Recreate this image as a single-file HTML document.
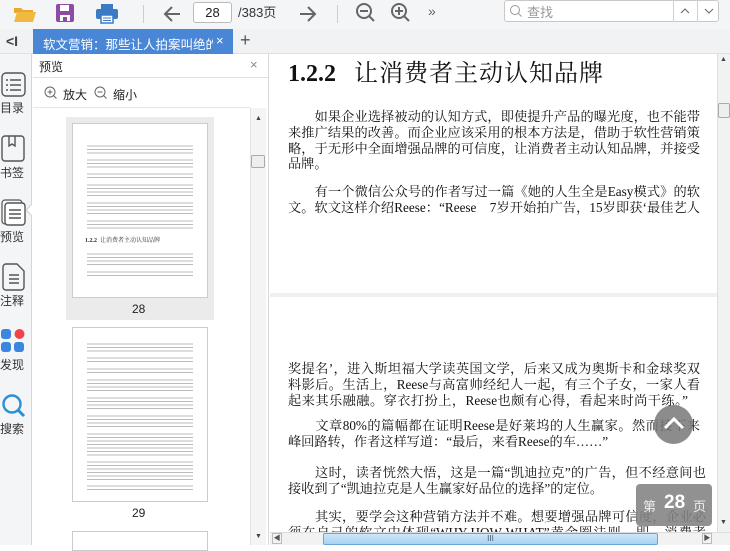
<!DOCTYPE html>
<html><head><meta charset="utf-8"><style>
*{margin:0;padding:0;box-sizing:border-box}
body{width:730px;height:545px;overflow:hidden;background:#fff;font-family:"Liberation Sans","Noto Sans CJK SC",sans-serif;position:relative}
.a{position:absolute}
.tb{left:0;top:0;width:730px;height:29px;background:#f4f5f7}
.tabbar{left:0;top:29px;width:730px;height:25px;background:#f1f2f4;border-bottom:1px solid #e0e0e0}
.side{left:0;top:54px;width:32px;height:491px;background:#f4f5f7;border-right:1px solid #d6d6d6}
.sl{font-size:12px;color:#333;width:32px;text-align:center}
.panel{left:33px;top:54px;width:236px;height:491px;background:#fff;border-right:1px solid #d8d8d8}
.pt{font-size:12px;color:#222}
.view{left:270px;top:54px;width:447px;height:478px;background:#f0f0f0}
.pg{background:#fff;left:270px;width:447px}
.ln{position:absolute;left:288px;width:412px;font-family:"Liberation Serif","Noto Serif CJK SC",serif;font-size:13.2px;line-height:17px;color:#111;text-align:justify;text-align-last:justify;white-space:nowrap;overflow:visible}
.ln.l{text-align-last:left}
.th{background:#fff;border:1px solid #ccc}
.tx{position:absolute;left:14px;right:14px;background:repeating-linear-gradient(#fff 0,#fff 1.3px,#bbb 1.3px,#bbb 2.3px,#fff 2.3px,#fff 3.5px)}
</style></head><body>
<div class="a tb"></div>
<svg class="a" style="left:13px;top:4px" width="24" height="20"><path d="M1 4h7l2 2h10v3H1z" fill="#e8a830"/><path d="M1 18L4 8h19l-3 10z" fill="#f2b940"/></svg>
<svg class="a" style="left:56px;top:4px" width="19" height="19"><rect x="0" y="0" width="18" height="18" rx="2" fill="#8e4aa5"/><rect x="4" y="1" width="9" height="6" fill="#fff"/><rect x="4" y="11" width="10" height="6" fill="#fff"/><rect x="7" y="13" width="4" height="4" fill="#8e4aa5"/></svg>
<svg class="a" style="left:96px;top:4px" width="22" height="20"><rect x="5" y="0" width="12" height="5" fill="#3b7bc4"/><rect x="0" y="5" width="22" height="10" rx="2" fill="#3b7bc4"/><rect x="5" y="11" width="12" height="8" fill="#fff" stroke="#3b7bc4" stroke-width="1.5"/><line x1="7" y1="14" x2="15" y2="14" stroke="#3b7bc4"/><line x1="7" y1="16.5" x2="15" y2="16.5" stroke="#3b7bc4"/></svg>
<div class="a" style="left:143px;top:5px;width:1px;height:18px;background:#ccc"></div>
<svg class="a" style="left:162px;top:4px" width="20" height="20"><path d="M18 10H3M10 3L3 10l7 7" stroke="#666" stroke-width="2" fill="none"/></svg>
<div class="a" style="left:193px;top:2px;width:39px;height:21px;border:1px solid #bbb;border-radius:3px;background:#fff;font-size:13px;text-align:center;line-height:19px;color:#222">28</div>
<div class="a" style="left:238px;top:3px;font-size:13px;color:#333;line-height:19px">/383页</div>
<svg class="a" style="left:298px;top:4px" width="20" height="20"><path d="M2 10h15M10 3l7 7-7 7" stroke="#666" stroke-width="2" fill="none"/></svg>
<div class="a" style="left:337px;top:5px;width:1px;height:18px;background:#ccc"></div>
<svg class="a" style="left:355px;top:2px" width="22" height="22"><circle cx="9" cy="9" r="7" stroke="#666" stroke-width="2" fill="none"/><path d="M5 9h8M14 14l5 5" stroke="#666" stroke-width="2"/></svg>
<svg class="a" style="left:390px;top:2px" width="22" height="22"><circle cx="9" cy="9" r="7" stroke="#666" stroke-width="2" fill="none"/><path d="M5 9h8M9 5v8M14 14l5 5" stroke="#666" stroke-width="2"/></svg>
<div class="a" style="left:428px;top:3px;font-size:14px;color:#666">»</div>
<div class="a" style="left:504px;top:0;width:215px;height:22px;border:1px solid #c8c8c8;border-radius:3px;background:#fff"></div>
<svg class="a" style="left:509px;top:4px" width="14" height="14"><circle cx="6" cy="6" r="4.5" stroke="#999" fill="none"/><path d="M9.5 9.5l3 3" stroke="#999"/></svg>
<div class="a" style="left:527px;top:2px;font-size:13px;color:#999">查找</div>
<div class="a" style="left:673px;top:0;width:1px;height:22px;background:#d0d0d0"></div>
<div class="a" style="left:697px;top:0;width:1px;height:22px;background:#d0d0d0"></div>
<svg class="a" style="left:680px;top:7px" width="10" height="8"><path d="M1 6l4-4 4 4" stroke="#666" fill="none"/></svg>
<svg class="a" style="left:704px;top:7px" width="10" height="8"><path d="M1 2l4 4 4-4" stroke="#666" fill="none"/></svg>

<div class="a tabbar"></div>
<div class="a" style="left:6px;top:33px;font-size:14px;color:#444;font-weight:bold">&lt;I</div>
<div class="a" style="left:33px;top:29px;width:200px;height:25px;background:#4a86d6"></div>
<div class="a" style="left:43px;top:34px;font-size:12.5px;color:#fff;white-space:nowrap;width:170px;overflow:hidden">软文营销：那些让人拍案叫绝的软</div>
<div class="a" style="left:216px;top:33px;font-size:13px;color:#fff">×</div>
<div class="a" style="left:240px;top:30px;font-size:18px;color:#555">+</div>

<div class="a side"></div>
<svg class="a" style="left:1px;top:72px" width="25" height="25"><rect x="1" y="1" width="23" height="23" rx="4" stroke="#555" stroke-width="1.4" fill="none"/><path d="M5 8h2M9 8h11M5 13h2M9 13h11M5 18h2M9 18h11" stroke="#555" stroke-width="1.6"/></svg>
<div class="a sl" style="left:-4px;top:99px">目录</div>
<svg class="a" style="left:1px;top:135px" width="25" height="28"><rect x="1" y="1" width="22" height="25" rx="3" stroke="#555" stroke-width="1.4" fill="none"/><path d="M8 1v10l3-2 3 2V1" stroke="#555" stroke-width="1.4" fill="none"/></svg>
<div class="a sl" style="left:-4px;top:164px">书签</div>
<svg class="a" style="left:1px;top:199px" width="26" height="27"><rect x="1" y="1" width="20" height="24" rx="3" stroke="#555" stroke-width="1.2" fill="none"/><rect x="4" y="4" width="20" height="22" rx="3" stroke="#555" stroke-width="1.4" fill="#fff"/><path d="M8 11h12M8 15h12M8 19h12" stroke="#555" stroke-width="1.4"/></svg>
<div class="a" style="left:27px;top:206px;width:8px;height:8px;background:#fff;border-left:1px solid #ccc;border-bottom:1px solid #ccc;transform:rotate(45deg)"></div>
<div class="a sl" style="left:-4px;top:228px">预览</div>
<svg class="a" style="left:2px;top:263px" width="24" height="28"><path d="M1 4a3 3 0 0 1 3-3h11l7 7v16a3 3 0 0 1-3 3H4a3 3 0 0 1-3-3z" stroke="#555" stroke-width="1.4" fill="none"/><path d="M7 12h10M7 16h10M7 20h10" stroke="#555" stroke-width="1.4"/></svg>
<div class="a sl" style="left:-4px;top:292px">注释</div>
<svg class="a" style="left:0;top:328px" width="26" height="26"><rect x="1" y="1" width="10" height="10" rx="3" fill="#3b87e0"/><circle cx="19.5" cy="6" r="5" fill="#f0444a"/><rect x="1" y="14" width="10" height="10" rx="3" fill="#3b87e0"/><rect x="14" y="14" width="10" height="10" rx="3" fill="#3b87e0"/></svg>
<div class="a sl" style="left:-4px;top:356px">发现</div>
<svg class="a" style="left:1px;top:393px" width="26" height="26"><circle cx="11" cy="11" r="8.5" stroke="#2b8fd6" stroke-width="2.4" fill="none"/><path d="M17 17l6 6" stroke="#2b8fd6" stroke-width="3"/></svg>
<div class="a sl" style="left:-4px;top:420px">搜索</div>

<div class="a panel"></div>
<div class="a pt" style="left:39px;top:58px">预览</div>
<div class="a" style="left:250px;top:57px;font-size:13px;color:#888">×</div>
<div class="a" style="left:33px;top:77px;width:235px;height:1px;background:#e0e0e0"></div>
<svg class="a" style="left:44px;top:86px" width="14" height="14"><circle cx="6" cy="6" r="5" stroke="#666" fill="none"/><path d="M3.5 6h5M6 3.5v5M9.5 9.5l3 3" stroke="#666"/></svg>
<div class="a pt" style="left:63px;top:86px">放大</div>
<svg class="a" style="left:94px;top:86px" width="14" height="14"><circle cx="6" cy="6" r="5" stroke="#666" fill="none"/><path d="M3.5 6h5M9.5 9.5l3 3" stroke="#666"/></svg>
<div class="a pt" style="left:113px;top:86px">缩小</div>
<div class="a" style="left:33px;top:107px;width:217px;height:1px;background:#e6e6e6"></div>
<div class="a" style="left:250px;top:108px;width:16px;height:437px;background:#f4f4f4;border-left:1px solid #e2e2e2"></div>
<div class="a" style="left:255px;top:115px;font-size:7px;color:#444">▲</div>
<div class="a" style="left:251px;top:155px;width:14px;height:13px;background:#eee;border:1px solid #aaa;border-radius:2px"></div>
<div class="a" style="left:255px;top:533px;font-size:7px;color:#444">▼</div>

<div class="a" style="left:66px;top:117px;width:148px;height:203px;background:#ebebeb"></div>
<div class="a th" style="left:72px;top:123px;width:136px;height:175px">
<div class="tx" style="top:20px;height:10px"></div><div class="tx" style="top:34px;height:10px"></div><div class="tx" style="top:48px;height:7px"></div><div class="tx" style="top:59px;height:14px"></div><div class="tx" style="top:77px;height:14px"></div><div class="tx" style="top:95px;height:10px"></div>
<div style="position:absolute;left:12px;top:111px;font-size:6px;color:#333;font-family:'Liberation Serif','Noto Serif CJK SC',serif"><b>1.2.2</b>&nbsp; 让消费者主动认知品牌</div>
<div class="tx" style="top:128px;height:13px"></div><div class="tx" style="top:146px;height:7px"></div>
</div>
<div class="a" style="left:132px;top:302px;font-size:12px;color:#222">28</div>
<div class="a th" style="left:72px;top:327px;width:136px;height:175px">
<div class="tx" style="top:14px;height:10px"></div><div class="tx" style="top:28px;height:7px"></div><div class="tx" style="top:39px;height:7px"></div><div class="tx" style="top:50px;height:14px"></div><div class="tx" style="top:68px;height:14px"></div><div class="tx" style="top:86px;height:14px"></div><div class="tx" style="top:104px;height:24px"></div><div class="tx" style="top:132px;height:20px"></div><div class="tx" style="top:156px;height:7px"></div>
</div>
<div class="a" style="left:132px;top:506px;font-size:12px;color:#222">29</div>
<div class="a th" style="left:72px;top:531px;width:136px;height:20px"></div>

<div class="a view"></div>
<div class="a pg" style="top:54px;height:239px"></div>
<div class="a pg" style="top:297px;height:235px"></div>
<div class="a" style="left:288px;top:53px;font-family:'Liberation Serif','Noto Serif CJK SC',serif;font-size:24px;color:#111;white-space:nowrap"><b>1.2.2</b>&nbsp;&nbsp; <span style="letter-spacing:1px">让消费者主动认知品牌</span></div>
<div class="ln" style="top:108px">　　如果企业选择被动的认知方式，即使提升产品的曝光度，也不能带</div>
<div class="ln" style="top:124px">来推广结果的改善。而企业应该采用的根本方法是，借助于软性营销策</div>
<div class="ln" style="top:140px">略，于无形中全面增强品牌的可信度，让消费者主动认知品牌，并接受</div>
<div class="ln l" style="top:155px">品牌。</div>
<div class="ln" style="top:183px">　　有一个微信公众号的作者写过一篇《她的人生全是Easy模式》的软</div>
<div class="ln" style="top:199px">文。软文这样介绍Reese：“Reese　7岁开始拍广告，15岁即获‘最佳艺人</div>
<div class="ln" style="top:360px">奖提名’，进入斯坦福大学读英国文学，后来又成为奥斯卡和金球奖双</div>
<div class="ln" style="top:376px">料影后。生活上，Reese与高富帅经纪人一起，有三个子女，一家人看</div>
<div class="ln" style="top:392px;width:400px">起来其乐融融。穿衣打扮上，Reese也颇有心得，看起来时尚干练。”</div>
<div class="ln" style="top:417px">　　文章80%的篇幅都在证明Reese是好莱坞的人生赢家。然而接下来</div>
<div class="ln l" style="top:433px">峰回路转，作者这样写道：“最后，来看Reese的车……”</div>
<div class="ln" style="top:464px;width:418px">　　这时，读者恍然大悟，这是一篇“凯迪拉克”的广告，但不经意间也</div>
<div class="ln l" style="top:480px">接收到了“凯迪拉克是人生赢家好品位的选择”的定位。</div>
<div class="ln" style="top:508px;width:418px">　　其实，要学会这种营销方法并不难。想要增强品牌可信度，企业必</div>
<div class="ln" style="top:524px;width:418px">须在自己的软文中体现“WHY-HOW-WHAT”黄金圈法则，即，消费者</div>

<div class="a" style="left:654px;top:405px;width:39px;height:39px;border-radius:50%;background:rgba(120,120,120,.85)"></div>
<svg class="a" style="left:662px;top:414px" width="24" height="18"><path d="M3 14l9-9 9 9" stroke="#fff" stroke-width="3" fill="none"/></svg>
<div class="a" style="left:636px;top:484px;width:76px;height:42px;border-radius:4px;background:rgba(130,130,130,.88)"></div>
<div class="a" style="left:643px;top:496px;font-size:13px;color:#eee">第</div>
<div class="a" style="left:664px;top:492px;font-size:19px;font-weight:bold;color:#fff">28</div>
<div class="a" style="left:693px;top:496px;font-size:13px;color:#eee">页</div>

<div class="a" style="left:717px;top:54px;width:13px;height:478px;background:#f2f2f2;border-left:1px solid #ddd"></div>
<div class="a" style="left:720px;top:56px;font-size:7px;color:#444">▲</div>
<div class="a" style="left:718px;top:103px;width:12px;height:15px;background:#eee;border:1px solid #aaa;border-radius:2px"></div>
<div class="a" style="left:720px;top:519px;font-size:7px;color:#444">▼</div>
<div class="a" style="left:270px;top:532px;width:460px;height:13px;background:#f2f2f2;border-top:1px solid #ddd"></div>
<div class="a" style="left:272px;top:533px;width:10px;height:11px;border:1px solid #bbb;font-size:7px;color:#555;line-height:9px;text-align:center">◀</div>
<div class="a" style="left:323px;top:533px;width:335px;height:12px;background:linear-gradient(#cfe6f8,#a8d2f2);border:1px solid #6aa5d6;border-radius:2px;text-align:center;font-size:8px;color:#456;line-height:10px">III</div>
<div class="a" style="left:702px;top:533px;width:10px;height:11px;border:1px solid #bbb;font-size:7px;color:#555;line-height:9px;text-align:center">▶</div>
</body></html>
